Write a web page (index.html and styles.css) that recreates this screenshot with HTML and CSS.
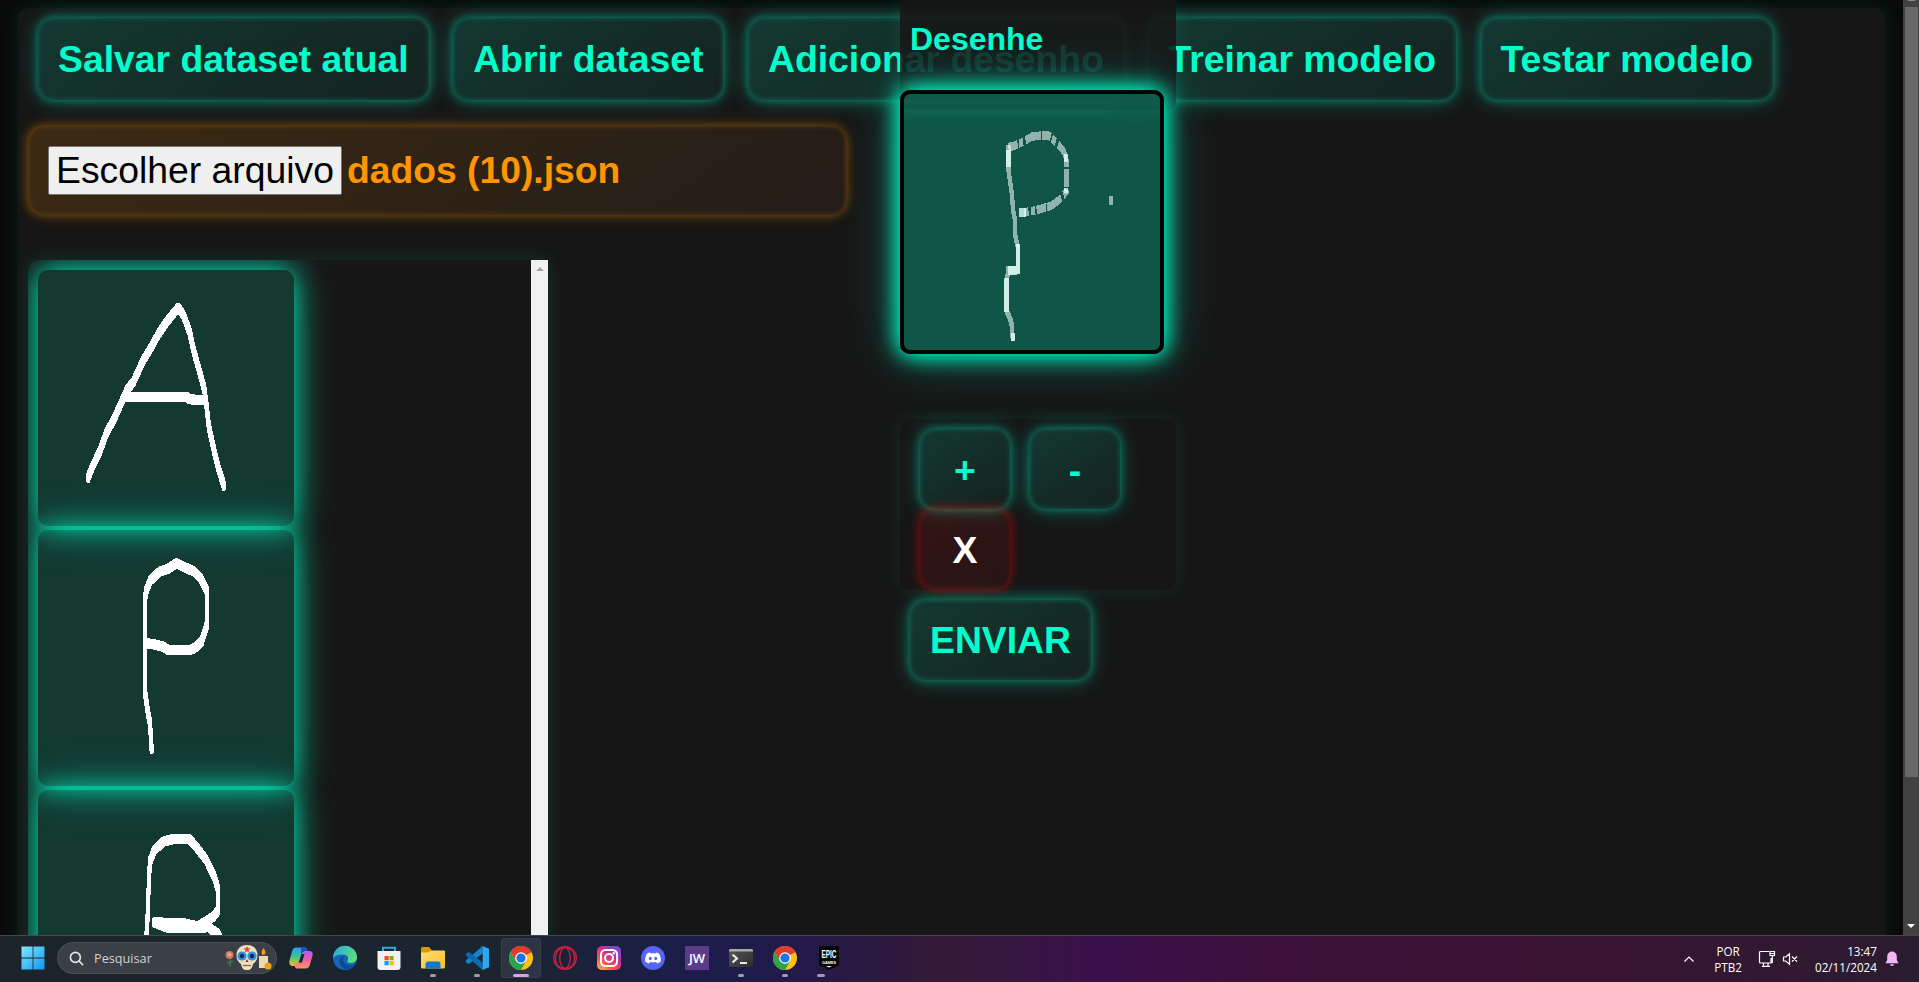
FILE: index.html
```html
<!DOCTYPE html>
<html lang="pt-BR">
<head>
<meta charset="utf-8">
<title>Dataset de desenhos</title>
<link rel="stylesheet" href="styles.css">
</head>
<body>
<svg width="0" height="0" class="defs">
  <defs>
    <filter id="pen" filterUnits="userSpaceOnUse" x="0" y="0" width="300" height="150"><feMorphology operator="dilate" radius="1.5 1.6"/></filter>
    <linearGradient id="win" x1="0" y1="0" x2="1" y2="1"><stop offset="0" stop-color="#7fe9ff"/><stop offset="1" stop-color="#1593ee"/></linearGradient>
    <linearGradient id="cpA" x1="0" y1="0" x2="0" y2="1"><stop offset="0" stop-color="#2a9df4"/><stop offset=".5" stop-color="#3cc48a"/><stop offset="1" stop-color="#f5c518"/></linearGradient>
    <linearGradient id="cpB" x1="0" y1="0" x2="0" y2="1"><stop offset="0" stop-color="#b45cf0"/><stop offset=".5" stop-color="#ec5fa4"/><stop offset="1" stop-color="#ff9460"/></linearGradient>
    <linearGradient id="edge" x1="0" y1="0" x2="1" y2=".4"><stop offset="0" stop-color="#25a8e8"/><stop offset="1" stop-color="#5bdc7c"/></linearGradient>
    <linearGradient id="insta" x1="0" y1="1" x2=".8" y2="0"><stop offset="0" stop-color="#fdc54e"/><stop offset=".35" stop-color="#f4514b"/><stop offset=".65" stop-color="#cf2d92"/><stop offset="1" stop-color="#6c4cd6"/></linearGradient>
    <linearGradient id="fold" x1="0" y1="0" x2="1" y2="1"><stop offset="0" stop-color="#ffdf78"/><stop offset="1" stop-color="#f8bc2c"/></linearGradient>
    <linearGradient id="term" x1="0" y1="0" x2="1" y2="1"><stop offset="0" stop-color="#565656"/><stop offset="1" stop-color="#2c2c2c"/></linearGradient>
    <symbol id="chrome" viewBox="0 0 24 24">
      <circle cx="12" cy="12" r="12" fill="#fbc116"/>
      <path d="M12 12 1.6 6A12 12 0 0 1 22.4 6z" fill="#e33b2e"/>
      <path d="M12 6.4H22.6A12 12 0 0 0 1.6 6L7 14.8z" fill="#e33b2e"/>
      <path d="M1.6 6A12 12 0 0 0 12 24l5-9-5 2.6-5-2.8z" fill="#2ba24c"/>
      <circle cx="12" cy="12" r="5.8" fill="#fff"/><circle cx="12" cy="12" r="4.6" fill="#1a73e8"/>
    </symbol>
  </defs>
</svg>
<div class="browser">
  <div class="page">
    <main class="panel">
      <nav class="toolbar">
        <button class="btn">Salvar dataset atual</button>
        <button class="btn">Abrir dataset</button>
        <button class="btn">Adicionar desenho</button>
        <button class="btn">Treinar modelo</button>
        <button class="btn">Testar modelo</button>
      </nav>
      <div class="file"><span class="file-btn">Escolher arquivo</span><span>dados (10).json</span></div>
      <div class="list">
        <div class="samples">
          <svg class="sample" viewBox="0 0 300 150" preserveAspectRatio="none"><g filter="url(#pen)">
            <polyline points="57.9,122.6 63.9,115.2 72.4,106.4 80,95.7 89.5,86.9 100,75.2 104.4,70.3 112,65.4 123.5,52.7 130.8,46.9 140.6,38 150,30.9 164.4,22 170.4,26.4 177.6,36.1 182.3,46.9 188.3,57.6 194.7,69.3 197.7,80 200.2,91.8 205.3,103.5 210.9,115.2 218.5,127.3"/>
            <polyline points="104.4,74.6 174.7,74.6 178,75.8 196,76.2"/>
          </g></svg>
          <svg class="sample" viewBox="0 0 300 150" preserveAspectRatio="none"><g filter="url(#pen)">
            <polyline points="133.3,129.3 131.2,113.3 127.8,103.5 125.2,93.8 125.2,41 127,35.2 132,29.3 142.7,24.4 153.4,22.5 161.9,19.5 170.4,21.5 183.2,24.4 190.8,28.3 197.7,35.2 198.5,54.7 191.7,65.4 183.2,69.3 176.8,70.5 153.4,70.5 147,68.4 134.2,66.8 127.8,66.4"/>
          </g></svg>
          <svg class="sample" viewBox="0 0 300 150" preserveAspectRatio="none"><g filter="url(#pen)">
            <polyline points="126,90 127.8,82 130,52.7 131.2,42 136.3,35.2 147,30.3 159.8,28.5 176.8,28.5 185.3,33.2 197.2,41 206.6,50.8 211.3,58.6 211.3,70.3 205.8,74.2 187.4,80 170.4,78.1 136,77.5 153.4,81 200,80.5 211,84.4 218,92"/>
          </g></svg>
        </div>
        <div class="list-bar"><i class="up"></i></div>
      </div>
    </main>
    <section class="modal">
      <h2 class="modal-title">Desenhe</h2>
      <svg class="board" viewBox="0 0 300 150" preserveAspectRatio="none">
        <g class="faint">
          <polyline points="122.4,31 129,30.5 139.7,27.9 149.7,25 160,24.4 169.8,24.4 179.4,28.9 187.5,33.8 190.4,38.7 190.4,57.2 181.8,62.1 172.2,65.6 155.4,68 141,69.3" stroke-dasharray="11 1.5 5 3 18 1"/>
          <polyline points="122.4,30 122.4,44.5 126.8,60.2 127.7,68 130,73.8 130.6,83.6 133.4,89.4 133.4,103 122,103.5 120,111 120,126.6 125.8,133.4 127.7,144.7"/>
          <path d="M242.5 60V65.2"/>
        </g>
        <g class="bright">
          <path d="M122.4 33V43M135 69.3H143M133.4 88V105.5M122 103.5H133M120 108V128M127.7 140V144.7M190 35V40M190 55V58"/>
        </g>
      </svg>
      <div class="controls">
        <button class="btn key">+</button>
        <button class="btn key">-</button>
        <button class="btn key danger">X</button>
      </div>
      <button class="btn send">ENVIAR</button>
    </section>
  </div>
  <div class="scroll"><i class="tip"></i><i class="thumb"></i><i class="down"></i></div>
</div>
<footer class="taskbar">
  <div class="apps">
    <span class="app start"><svg viewBox="0 0 24 24"><path fill="url(#win)" d="M.5.5h11.100v11.100H.5zM12.400.5h11.100v11.100H12.400zM.5 12.400h11.100v11.100H.5zM12.400 12.400h11.100v11.100H12.400z"/></svg></span>
    <div class="search">
      <svg class="lens" viewBox="0 0 16 16"><circle cx="6.8" cy="6.8" r="5.3"/><path d="M10.7 10.7 15 15"/></svg>
      <span>Pesquisar</span>
      <svg class="skull" viewBox="0 0 48 28">
        <path d="M6 14v9M6 20l-3-2M6 19l3-2" stroke="#3f7a4a" stroke-width="1.3" fill="none"/><circle cx="5.5" cy="11" r="4" fill="#c97a68"/><circle cx="5.5" cy="10.5" r="2" fill="#e8a08c"/>
        <path d="M23 1c-7 0-10.5 4.500-10.500 10 0 5 2 7 4.500 9 1 4 2 6 6 6s5-2 6-6c2.500-2 4.500-4 4.500-9C33.500 5.500 30 1 23 1z" fill="#f0dfbd"/>
        <circle cx="18" cy="12" r="4.600" fill="#2f8fe0"/><circle cx="28" cy="12" r="4.600" fill="#2f8fe0"/><circle cx="18" cy="12" r="2.200" fill="#152c4a"/><circle cx="28" cy="12" r="2.200" fill="#152c4a"/>
        <path d="m23 2 1 2.300 2.500.2-1.900 1.600.6 2.400L23 7.200l-2.200 1.300.6-2.400-1.900-1.600 2.500-.2z" fill="#d8473c"/><path d="m23 15-1.500 3h3z" fill="#6b4a2c"/><path d="M19 21.500h8" stroke="#7c6a4a" stroke-width="1.200"/>
        <path d="M35 12h9v12h-9z" fill="#ecd9b0"/><path d="M39.500 4c3 4 2 7 0 7s-3-3 0-7z" fill="#ff9a1f"/><circle cx="44" cy="22" r="3.500" fill="#f2a31c"/>
      </svg>
    </div>
    <span class="app"><svg viewBox="0 0 24 24"><path d="M7.500 1.500H16c1.500 0 2 1 2.300 2.500l.7 2.500h-4L10.500 18c-.5 1.500-1.500 2-3 2H4C.8 20-.2 17.500.5 14.500L3 5.500c.8-2.800 2-4 4.500-4z" fill="url(#cpA)"/><path d="M12 1.500h4c1.500 0 2 1 2.300 2.500l.7 2.500h-4.500c-1.500 0-2 .5-2.500 2z" fill="#1c4fd0"/><path d="M16.500 22.500H8c-1.500 0-2-1-2.300-2.500L5 17.500h4L13.500 7c.5-1.500 1.500-2 3-2H20c3.200 0 4.200 1.500 3.500 4.500L21 18.500c-.8 2.800-2 4-4.500 4z" fill="url(#cpB)"/><path d="M12.500 8h3l-2.600 8.500H9.600z" fill="#1a2633"/></svg></span>
    <span class="app"><svg viewBox="0 0 24 24"><circle cx="12" cy="12" r="12" fill="#1565b8"/><path d="M0 12A12 12 0 0 1 24 11.500c0 4-3.500 5.500-6.500 5.500-2.500 0-3.800-1-3-2.300 1.600-2.700 0-6.200-4.500-6.200C5 8.500 1 10 0 12z" fill="url(#edge)"/><path d="M8 11c-3 3.500-1.500 10 5 12.500 4 .6 7.500-2 9.300-5-6 2.800-12-.500-12.200-4.500 0-1.600.5-2.500 1.400-3.500-1-.6-2.500-.5-3.500.5z" fill="#0d4a94"/></svg></span>
    <span class="app"><svg viewBox="0 0 24 24"><path d="M6 6V1.800h12V6" fill="none" stroke="#2aa9e8" stroke-width="2"/><path d="M.5 5h23v16a3 3 0 0 1-3 3h-17a3 3 0 0 1-3-3z" fill="#f2f2f2"/><path d="M7.500 10h4.200v4.200H7.500z" fill="#f04e23"/><path d="M12.500 10h4.200v4.200h-4.200z" fill="#7db700"/><path d="M7.500 15h4.200v4.200H7.500z" fill="#01a4ef"/><path d="M12.500 15h4.200v4.200h-4.200z" fill="#ffb902"/></svg></span>
    <span class="app run"><svg viewBox="0 0 24 24"><path d="M0 2.500a1.500 1.500 0 0 1 1.500-1.500H8l2.500 3V9H0z" fill="#d99a06"/><path d="M0 6.500h7.500l2.500-2h13a1 1 0 0 1 1 1V21a1.500 1.500 0 0 1-1.500 1.500h-21A1.500 1.500 0 0 1 0 21z" fill="url(#fold)"/><path d="M4.500 22.500V18a2.500 2.500 0 0 1 2.500-2.500h10a2.500 2.500 0 0 1 2.500 2.500v4.500z" fill="#1279cf"/></svg></span>
    <span class="app run"><svg viewBox="0 0 24 24"><path d="M17.500 0 1.200 14.200c-.7.700-.7 1.300 0 2l1.500 1.300c.6.500 1.100.5 1.700.1L18 7.200z" fill="#1583cf"/><path d="M17.500 24 1.200 9.800c-.7-.7-.7-1.300 0-2l1.500-1.300c.6-.5 1.100-.5 1.700-.1L18 16.800z" fill="#0c6bb0"/><path d="m17.500 0 6.500 2.800v18.400l-6.500 2.800c-.7-.5.2-1 .2-2V2c0-1-.9-1.500-.2-2z" fill="#2aa9f2"/></svg></span>
    <span class="app run active"><svg><use href="#chrome"/></svg></span>
    <span class="app"><svg viewBox="0 0 24 24" fill="none" stroke="#d02040" stroke-width="1.300"><circle cx="12" cy="12" r="11.300"/><ellipse cx="12" cy="12" rx="5.300" ry="10.300"/><path d="M10 1.500C0 4 0 20 10 22.500M14 1.500C24 4 24 20 14 22.500"/></svg></span>
    <span class="app"><svg viewBox="0 0 24 24"><rect width="24" height="24" rx="5" fill="url(#insta)"/><g fill="none" stroke="#fff" stroke-width="2"><rect x="4" y="4" width="16" height="16" rx="4.500"/><circle cx="12" cy="12" r="4"/></g><circle cx="16.700" cy="7.300" r="1.200" fill="#fff"/></svg></span>
    <span class="app"><svg viewBox="0 0 24 24"><circle cx="12" cy="12" r="12" fill="#5865f2"/><path d="M9.500 6.700 8.900 6.500C7.500 6.800 6.500 7.200 6 7.500 4.500 10 4 12.500 4.200 15.500c1.300 1 2.600 1.600 3.800 1.900l.9-1.500c2 .6 4.200.6 6.200 0l.9 1.500c1.200-.3 2.500-.9 3.800-1.900.2-3-.3-5.500-1.800-8-.8-.4-1.800-.8-2.900-1l-.6.9c-1.600-.3-3.300-.3-5 0z" fill="#fff"/><ellipse cx="9.300" cy="12.500" rx="1.500" ry="1.700" fill="#5865f2"/><ellipse cx="14.700" cy="12.500" rx="1.500" ry="1.700" fill="#5865f2"/></svg></span>
    <span class="app"><span class="jw">JW</span></span>
    <span class="app run"><svg viewBox="0 0 24 24"><rect y="3" width="24" height="18" rx="1.500" fill="url(#term)"/><path d="M0 5.500V4.500A1.500 1.500 0 0 1 1.500 3h21A1.500 1.500 0 0 1 24 4.500v1z" fill="#a9a9a9"/><path d="m3.500 8.500 4.500 4-4.500 4" fill="none" stroke="#e8e8e8" stroke-width="2.200"/><path d="M11 17h7" stroke="#e8e8e8" stroke-width="2"/></svg></span>
    <span class="app run"><svg><use href="#chrome"/></svg></span>
    <span class="app run epic"><svg viewBox="0 0 24 24"><path d="M3.500 0h17a1.500 1.500 0 0 1 1.500 1.500V19l-10 5-10-5V1.500A1.500 1.500 0 0 1 3.500 0z" fill="#060606"/><text x="12" y="12" textLength="15" lengthAdjust="spacingAndGlyphs" class="epic-a">EPIC</text><text x="12" y="17.500" textLength="14" lengthAdjust="spacingAndGlyphs" class="epic-b">GAMES</text><path d="M9 20h6l-3 1.500z" fill="#fff"/></svg></span>
  </div>
  <div class="tray">
    <svg class="chev" viewBox="0 0 12 8"><path d="m1.500 6.500 4.500-4.500 4.500 4.500"/></svg>
    <div class="lang">POR<br>PTB2</div>
    <svg class="net" viewBox="0 0 18 18"><path d="M11 1.500H2.500a1 1 0 0 0-1 1v9.500a1 1 0 0 0 1 1H13V8M5.500 13v3M10 13v3M4 16.300h8M12 1.500h4.500v4H12zM12 3.500h4M14.300 5.500V13"/></svg>
    <svg class="vol" viewBox="0 0 17 14"><path d="M1.500 5h2.200L7.500 1.800v10.400L3.700 9H1.500zM10 4.500l5 5M15 4.500l-5 5"/></svg>
    <div class="clock">13:47<br>02/11/2024</div>
    <svg class="bell" viewBox="0 0 14 16"><path d="M7 .5a4.800 4.800 0 0 1 4.800 4.800V9l1.700 3.200H.5L2.200 9V5.300A4.800 4.800 0 0 1 7 .5zM5 13.300h4a2 1.800 0 0 1-4 0z"/></svg>
  </div>
</footer>
</body>
</html>
```
FILE: styles.css
```css
* { box-sizing: border-box; }
body {
  margin: 0;
  height: 982px;
  display: flex;
  flex-direction: column;
  overflow: hidden;
  background: #080808;
  font-family: "Liberation Sans", Arial, sans-serif;
}
.defs { position: absolute; }
.browser { display: flex; height: 935px; }
.page {
  position: relative;
  flex: 1;
  overflow: hidden;
  padding: 8px 18px 0;
  background: #090a09;
}
.panel {
  height: 1200px;
  padding: 10px;
  border-radius: 10px;
  background: #161616;
  box-shadow: 0 0 20px rgba(0, 255, 204, .1);
}
.toolbar { display: flex; gap: 24.5px; padding-left: 10px; }
.btn {
  flex: none;
  height: 82px;
  padding: 0 20px;
  border: 0;
  border-radius: 15px;
  font: bold 37.33px "Liberation Sans", Arial, sans-serif;
  white-space: nowrap;
  color: #00ffcc;
  background: linear-gradient(145deg, rgba(0, 255, 204, .15), rgba(0, 255, 204, .05));
  box-shadow: 0 0 10px rgba(0, 255, 204, .4), 0 1px 22px rgba(0, 255, 204, .28), inset 0 0 5px rgba(0, 255, 204, .25);
}
.file {
  display: flex;
  align-items: center;
  gap: 5px;
  width: 818px;
  height: 89px;
  margin-top: 26px;
  padding: 0 20px;
  border-radius: 15px;
  font-size: 37.25px;
  font-weight: bold;
  color: #ff9500;
  background: linear-gradient(145deg, rgba(255, 149, 0, .16), rgba(255, 120, 60, .06));
  box-shadow: 0 0 10px rgba(255, 149, 0, .4), 0 0 20px rgba(255, 149, 0, .14), inset 0 0 5px rgba(255, 149, 0, .25);
}
.file-btn {
  height: 49px;
  padding: 2px 7px;
  border: 1px solid #767676;
  border-radius: 2px;
  font-weight: normal;
  font-size: 37.33px;
  color: #000;
  background: #efefef;
}
.list {
  display: flex;
  width: 520px;
  height: 900px;
  margin-top: 45px;
  overflow: hidden;
  border-radius: 10px 0 0 0;
  background: #171717;
  box-shadow: 0 0 20px rgba(0, 255, 204, .13);
}
.samples {
  flex: 1;
  display: flex;
  flex-direction: column;
  gap: 4px;
  padding: 10px;
  overflow: hidden;
}
.sample {
  flex: none;
  width: 256px;
  height: 256px;
  border-radius: 10px;
  background: rgba(0, 255, 204, .15);
  box-shadow: 0 0 28px rgba(0, 255, 204, .9), 0 0 50px rgba(0, 255, 204, .25);
  fill: none;
  stroke: #fff;
  stroke-width: 2.4;
  stroke-linejoin: round;
  shape-rendering: crispEdges;
}
.list-bar { width: 17px; background: #f1f1f1; display: flex; justify-content: center; padding-top: 7px; }
.up { width: 0; height: 0; border: 4px solid transparent; border-top: 0; border-bottom: 4px solid #a3a3a3; }

/* Drawing dialog, floats above the panel */
.modal { position: absolute; left: 900px; top: 0; width: 276px; }
.modal-title {
  height: 110px;
  margin: 0;
  padding: 21px 10px;
  border-radius: 0 0 10px 10px;
  font-size: 32px;
  line-height: 37px;
  color: #00ffcc;
  background: rgba(23, 23, 23, .87);
  box-shadow: 0 0 20px rgba(0, 255, 204, .1);
}
.board {
  position: relative;
  display: block;
  width: 264px;
  height: 264px;
  margin-top: -20px;
  border: 4px solid #000;
  border-radius: 10px;
  background: rgba(0, 255, 204, .28);
  box-shadow: 0 0 26px #00ffcc, 0 0 20px rgba(0, 255, 204, .7), 0 0 60px rgba(0, 255, 204, .3);
  fill: none;
  stroke-width: 5;
  shape-rendering: crispEdges;
}
.faint { stroke: rgba(255, 255, 255, .55); }
.bright { stroke: rgba(225, 255, 247, .8); }
.controls {
  display: flex;
  flex-wrap: wrap;
  column-gap: 20px;
  height: 171px;
  margin-top: 65px;
  padding: 10px 20px;
  border-radius: 10px;
  box-shadow: 0 0 20px rgba(0, 255, 204, .1);
}
.key { width: 90px; height: 80px; padding-top: 2px; }
.send { display: block; height: 80px; margin: 10px; }
.danger {
  color: #fff;
  background: linear-gradient(145deg, rgba(255, 0, 0, .13), rgba(255, 0, 0, .07));
  box-shadow: 0 0 10px rgba(255, 0, 0, .5), 0 0 20px rgba(255, 0, 0, .12), inset 0 0 5px rgba(255, 0, 0, .25);
}

.scroll { position: relative; width: 16px; background: #424242; }
.thumb { position: absolute; left: 2px; top: 7px; width: 13px; height: 770px; background: #686868; }
.tip { position: absolute; left: 5px; top: 0; width: 7px; height: 1px; background: #8a8a8a; }
.down { position: absolute; left: 4px; top: 924px; border: 4px solid transparent; border-bottom: 0; border-top-color: #fff; }

.taskbar {
  display: flex;
  justify-content: space-between;
  height: 47px;
  border-top: 1px solid #46474a;
  color: #fff;
  background: linear-gradient(90deg, #1b242a 0, #1a2530 500px, #1b1d4a 690px, #22194a 800px, #341a37 940px, #3a114c 1100px, #3c103c 1250px, #3b1233 1500px, #361532 1640px, #2b1c30 100%);
}
.apps { display: flex; align-items: center; padding: 0 0 2px 12px; }
.app { position: relative; width: 40px; height: 40px; margin: 0 2px; display: grid; place-items: center; border-radius: 4px; }
.app svg { width: 24px; height: 24px; }
.start { left: -1.5px; }
.run::after {
  content: "";
  position: absolute;
  left: 17px;
  bottom: 1px;
  width: 6px;
  height: 3px;
  border-radius: 2px;
  background: #a09fa8;
}
.active { background: rgba(255, 255, 255, .08); box-shadow: inset 0 0 0 1px rgba(255, 255, 255, .05); }
.active::after { left: 12px; width: 16px; background: #d9a0e6; }
.epic::after { left: 8px; width: 8px; }
.search {
  display: flex;
  align-items: center;
  width: 220px;
  height: 32px;
  margin: 0 2px 0 1px;
  padding: 0 4px 0 11px;
  border: 1px solid #4c5156;
  border-radius: 16px;
  background: #3a4046;
  color: #cfd2d4;
  font: 12.7px/16px "Open Sans", "Noto Sans", sans-serif;
}
.lens { width: 15px; height: 15px; margin-right: 10px; fill: none; stroke: #e4e6e8; stroke-width: 1.7; }
.skull { width: 48px; height: 28px; margin-left: auto; }
.jw { width: 24px; height: 24px; background: #5c3c88; font: 600 13px/24px "Open Sans", sans-serif; text-align: center; }
.epic-a, .epic-b { text-anchor: middle; fill: #fff; font: bold 10px "Liberation Sans", sans-serif; }
.epic-b { font-size: 4px; }
.app svg { overflow: visible; }
.tray {
  display: flex;
  align-items: center;
  padding: 0 20px 1px 0;
  font: 11.7px/16px "Open Sans", "Noto Sans", sans-serif;
}
.tray svg { fill: none; stroke: #fff; stroke-width: 1.2; }
.chev { width: 12px; height: 8px; margin-right: 19px; }
.lang { text-align: center; margin-right: 16px; }
.net { width: 18px; height: 18px; margin-right: 6px; }
.vol { width: 17px; height: 14px; margin-right: 16px; }
.clock { text-align: right; margin-right: 8px; }
.tray .bell { width: 14px; height: 16px; fill: #f0b8f4; stroke: none; }
```
